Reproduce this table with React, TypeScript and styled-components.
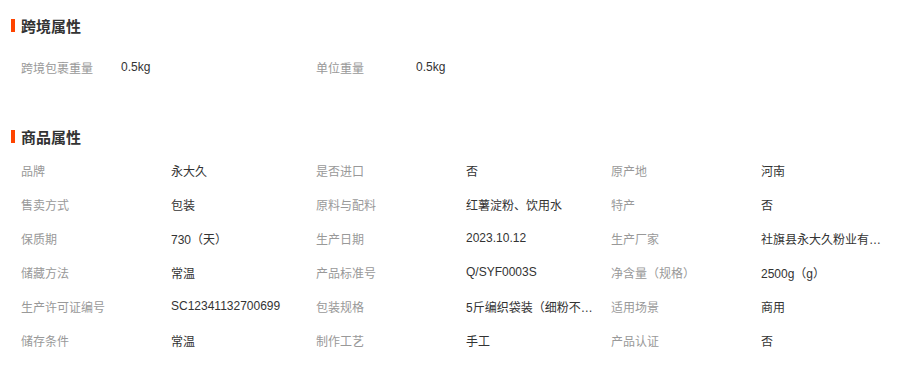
import React from 'react';
import styled, { createGlobalStyle } from 'styled-components';

interface IAttr {
    label: string;
    value: string;
}

const crossBorder: IAttr[] = [
    { label: '跨境包裹重量', value: '0.5kg' },
    { label: '单位重量', value: '0.5kg' },
];

const product: IAttr[] = [
    { label: '品牌', value: '永大久' },
    { label: '是否进口', value: '否' },
    { label: '原产地', value: '河南' },
    { label: '售卖方式', value: '包装' },
    { label: '原料与配料', value: '红薯淀粉、饮用水' },
    { label: '特产', value: '否' },
    { label: '保质期', value: '730（天）' },
    { label: '生产日期', value: '2023.10.12' },
    { label: '生产厂家', value: '社旗县永大久粉业有限公司' },
    { label: '储藏方法', value: '常温' },
    { label: '产品标准号', value: 'Q/SYF0003S' },
    { label: '净含量（规格）', value: '2500g（g）' },
    { label: '生产许可证编号', value: 'SC12341132700699' },
    { label: '包装规格', value: '5斤编织袋装（细粉不结块）' },
    { label: '适用场景', value: '商用' },
    { label: '储存条件', value: '常温' },
    { label: '制作工艺', value: '手工' },
    { label: '产品认证', value: '否' },
];

const Section = (props: { title: string; items: IAttr[]; labelWidth: number; offset: number }) => {
    const { title, items, labelWidth, offset } = props;

    return (
        <SectionWrapper>
            <SectionTitle>{title}</SectionTitle>
            <AttrGrid $offset={offset}>
                {items.map((item) => (
                    <AttrItem key={item.label}>
                        <AttrLabel $width={labelWidth}>{item.label}</AttrLabel>
                        <AttrValue title={item.value}>{item.value}</AttrValue>
                    </AttrItem>
                ))}
            </AttrGrid>
        </SectionWrapper>
    );
};

const App = () => {
    return (
        <>
            <GlobalStyle />
            <Page>
                <Section title="跨境属性" items={crossBorder} labelWidth={100} offset={15} />
                <Section title="商品属性" items={product} labelWidth={150} offset={7} />
            </Page>
        </>
    );
};

const GlobalStyle = createGlobalStyle`
    body {
        margin: 0;
        background: #fff;
        font-family: "Liberation Sans", "Noto Sans CJK SC", sans-serif;
    }
`;

const Page = styled.div`
    width: 913px;
    padding: 15px 0 0 11px;
    box-sizing: border-box;
    display: flex;
    flex-direction: column;
    gap: 42px;
`;

const SectionWrapper = styled.div`
    display: flex;
    flex-direction: column;
`;

const SectionTitle = styled.div`
    display: flex;
    align-items: center;
    gap: 6px;
    height: 20px;
    font-size: 15px;
    font-weight: bold;
    color: #333;

    &:before {
        content: "";
        width: 4px;
        height: 13px;
        background: #ff4400;
    }
`;

const AttrGrid = styled.div<{ $offset: number }>`
    display: grid;
    grid-template-columns: repeat(3, 295px);
    margin-top: ${(p) => p.$offset}px;
    padding-left: 10px;
`;

const AttrItem = styled.div`
    display: flex;
    align-items: center;
    height: 34px;
    font-size: 12px;
`;

const AttrLabel = styled.span<{ $width: number }>`
    flex: 0 0 ${(p) => p.$width}px;
    color: #999;
`;

const AttrValue = styled.span`
    flex: 0 0 130px;
    color: #333;
    white-space: nowrap;
    overflow: hidden;
    text-overflow: ellipsis;
`;

export default App;
